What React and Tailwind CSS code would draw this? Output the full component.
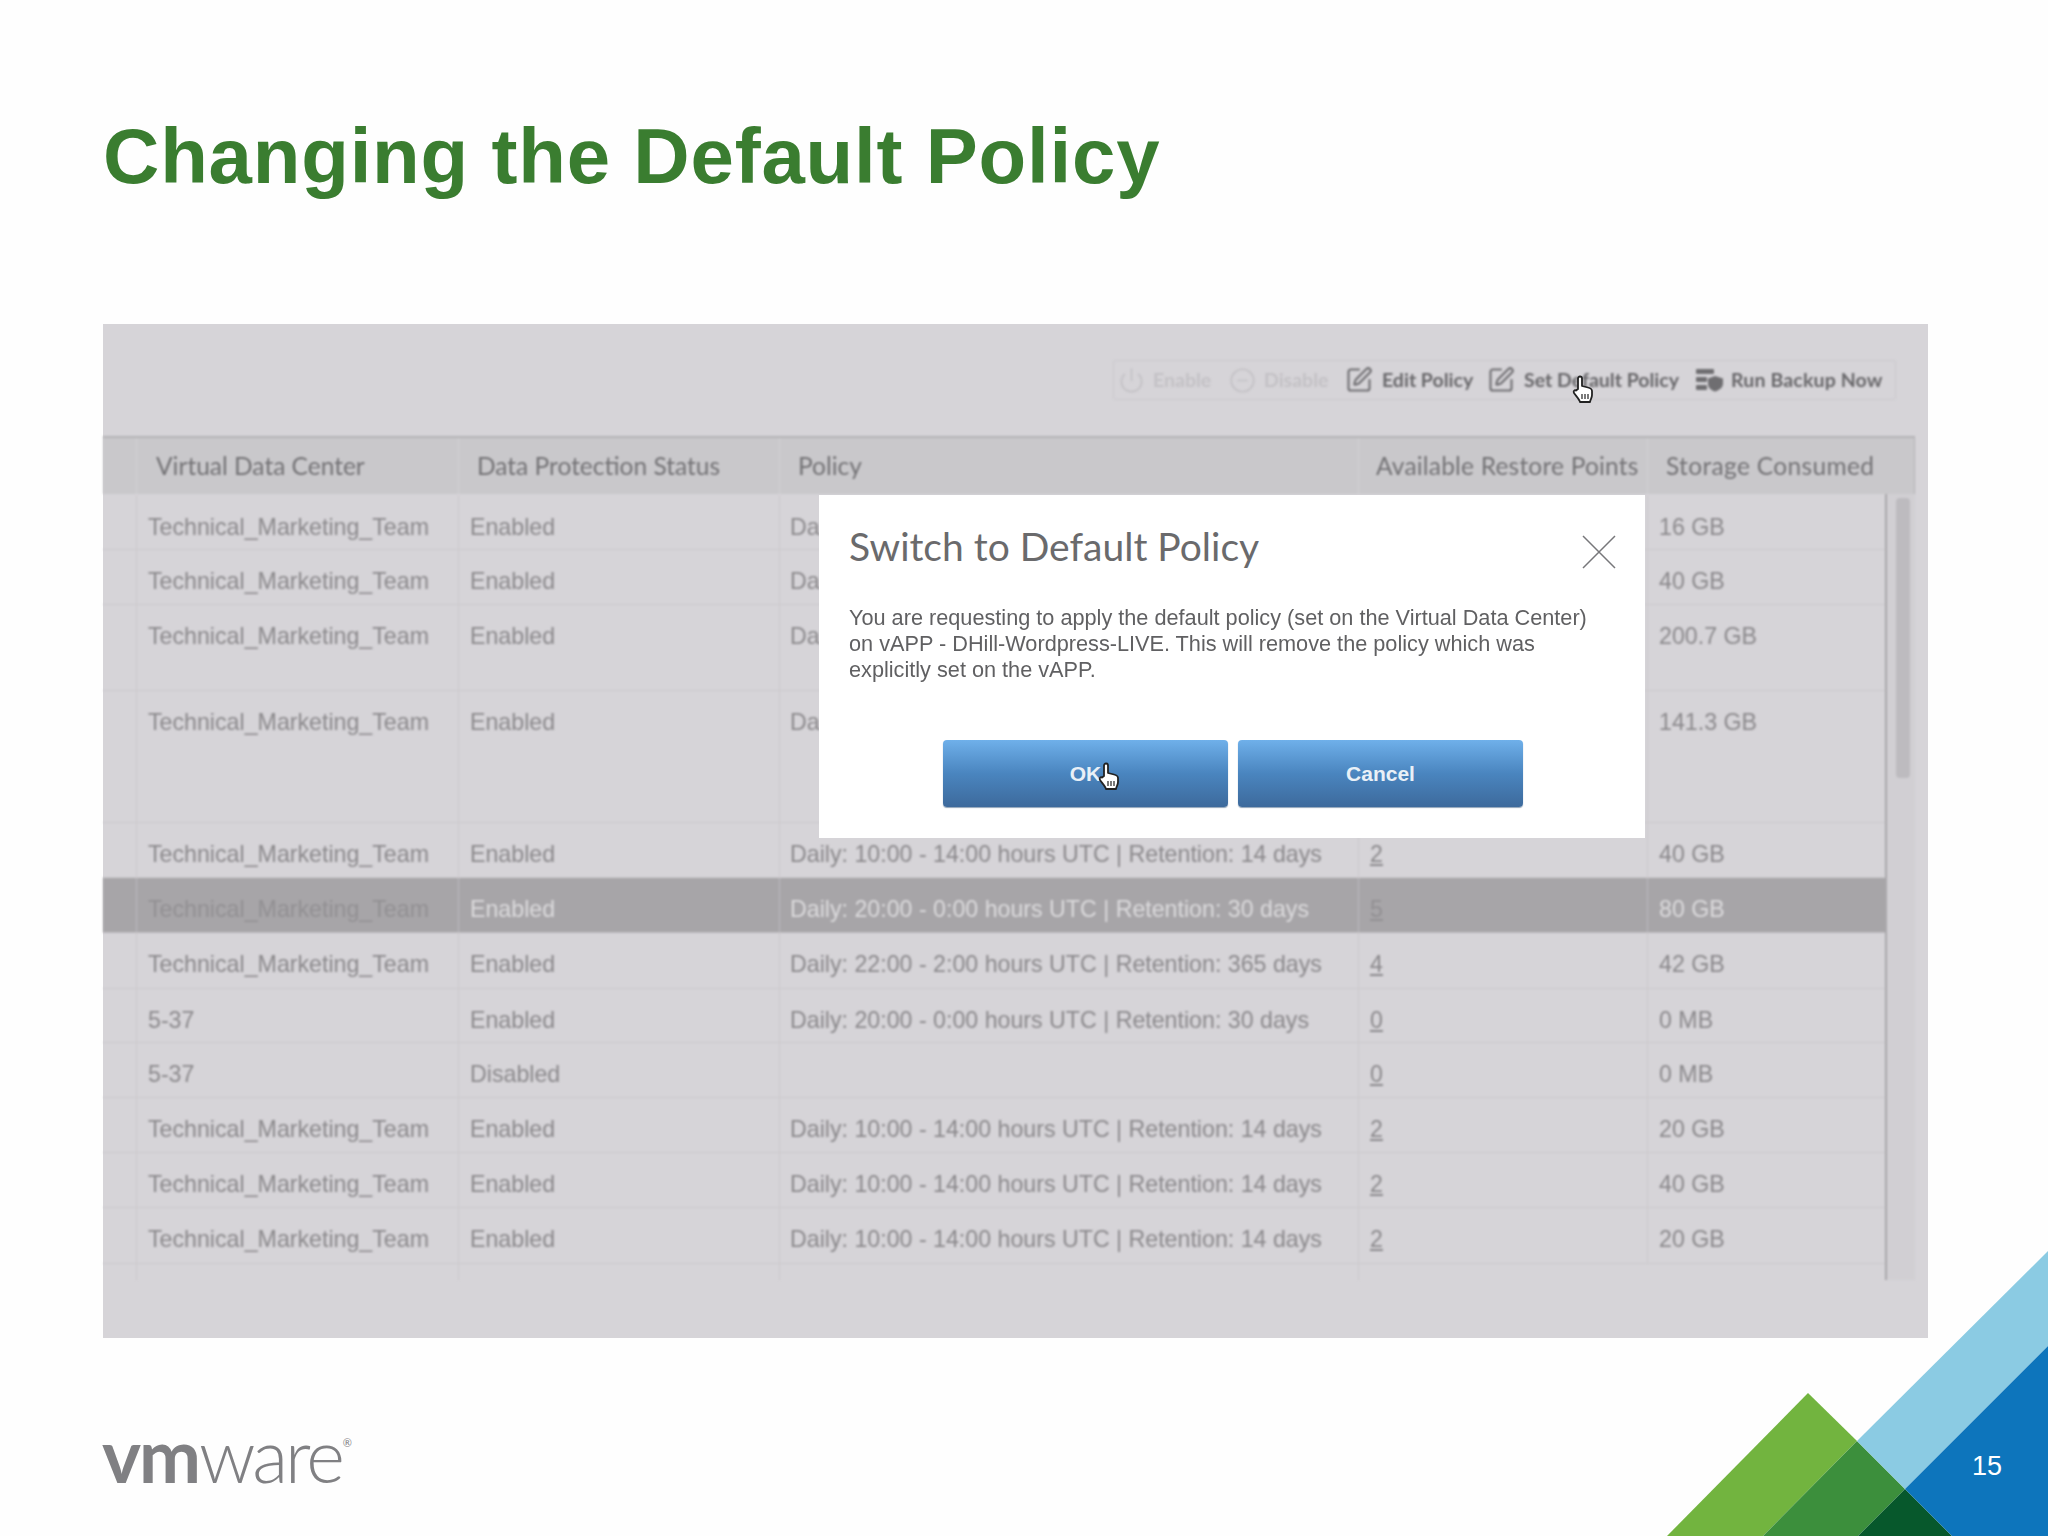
import { CircleMinus, Power, SquarePen } from "lucide-react";

const team = "Technical_Marketing_Team";
const policy14 = "Daily: 10:00 - 14:00 hours UTC | Retention: 14 days";

const rows = [
  { h: "h-[54px]", vdc: team, status: "Enabled", policy: "Daily:", points: "", size: "16 GB" },
  { h: "h-[55px]", vdc: team, status: "Enabled", policy: "Daily:", points: "", size: "40 GB" },
  { h: "h-[86px]", vdc: team, status: "Enabled", policy: "Daily:", points: "", size: "200.7 GB" },
  { h: "h-[132px]", vdc: team, status: "Enabled", policy: "Daily:", points: "", size: "141.3 GB" },
  { h: "h-[55px]", vdc: team, status: "Enabled", policy: policy14, points: "2", size: "40 GB" },
  { h: "h-[55px]", vdc: team, status: "Enabled", policy: "Daily: 20:00 - 0:00 hours UTC | Retention: 30 days", points: "5", size: "80 GB", selected: true },
  { h: "h-[56px]", vdc: team, status: "Enabled", policy: "Daily: 22:00 - 2:00 hours UTC | Retention: 365 days", points: "4", size: "42 GB" },
  { h: "h-[54px]", vdc: "5-37", status: "Enabled", policy: "Daily: 20:00 - 0:00 hours UTC | Retention: 30 days", points: "0", size: "0 MB" },
  { h: "h-[55px]", vdc: "5-37", status: "Disabled", policy: "", points: "0", size: "0 MB" },
  { h: "h-[55px]", vdc: team, status: "Enabled", policy: policy14, points: "2", size: "20 GB" },
  { h: "h-[55px]", vdc: team, status: "Enabled", policy: policy14, points: "2", size: "40 GB" },
  { h: "h-[56px]", vdc: team, status: "Enabled", policy: policy14, points: "2", size: "20 GB" },
];

export default function App() {
  return (
    <main className="relative h-[1536px] w-[2048px] overflow-hidden bg-[#fefefe] font-['Liberation_Sans',sans-serif]">
      <h1 className="pl-[103px] pt-[109px] text-[78px] font-bold leading-[94px] tracking-[0.8px] text-[#3a7d30]">
        Changing the Default Policy
      </h1>
      <VideoPanel />
      <Logo />
      <Corner />
    </main>
  );
}

function VideoPanel() {
  return (
    <section className="relative ml-[103px] mt-[121px] h-[1014px] w-[1825px] bg-[#d6d4d8]">
      <div className="h-full blur-[0.8px]">
        <Toolbar />
        <Table />
      </div>
      <HandCursor className="absolute left-[1468px] top-[50px]" />
      <Dialog />
    </section>
  );
}

function Toolbar() {
  return (
    <div className="flex justify-end pr-[32px] pt-[36px]">
      <div className="flex h-[40px] w-[783px] items-center rounded-[3px] border border-[#cbc9cd] text-[19.500px] font-bold font-['Lato',sans-serif]">
        <Power className="ml-[4px] h-[27px] w-[27px] text-[#c3c1c5]" strokeWidth={1.5} />
        <span className="ml-[8px] w-[59px] whitespace-nowrap text-[#c3c1c5]">Enable</span>
        <CircleMinus className="ml-[17px] h-[27px] w-[27px] text-[#c3c1c5]" strokeWidth={1.5} />
        <span className="ml-[8px] w-[66px] whitespace-nowrap text-[#c3c1c5]">Disable</span>
        <SquarePen className="ml-[15px] h-[28px] w-[28px] text-[#6f6e71]" strokeWidth={1.8} />
        <span className="ml-[9px] w-[91px] whitespace-nowrap text-[#68676a]">Edit Policy</span>
        <SquarePen className="ml-[14px] h-[28px] w-[28px] text-[#6f6e71]" strokeWidth={1.8} />
        <span className="ml-[9px] w-[157px] whitespace-nowrap text-[#68676a]">Set Default Policy</span>
        <BackupIcon />
        <span className="ml-[7px] whitespace-nowrap tracking-[0.15px] text-[#68676a]">Run Backup Now</span>
      </div>
    </div>
  );
}

function BackupIcon() {
  return (
    <svg viewBox="0 0 28 24" className="ml-[15px] h-[24px] w-[28px] shrink-0 text-[#6f6e71]" fill="currentColor">
      <rect x="0" y="1" width="18" height="5" rx="1" />
      <rect x="0" y="9" width="11" height="5" rx="1" />
      <rect x="0" y="17" width="11" height="5" rx="1" />
      <path d="M19 8l8 2.500v5c0 4-3.500 6.500-8 8-4.500-1.500-7-4-7-8v-5z" />
    </svg>
  );
}

function Table() {
  return (
    <div className="ml-0 mt-[36px] w-[1812px]">
      <div className="grid h-[58px] grid-cols-[33px_322px_321px_579px_289px_268px] border-r border-t-2 border-[#b4b3b6] bg-[#c9c8cb] text-[24.500px] leading-[55px] text-[#737275] font-['Lato',sans-serif]">
        <div />
        <div className="border-l border-[#d2d0d4] pl-[19px]">Virtual Data Center</div>
        <div className="border-l border-[#d2d0d4] pl-[18px]">Data Protection Status</div>
        <div className="border-l border-[#d2d0d4] pl-[18px]">Policy</div>
        <div className="border-l border-[#d2d0d4] pl-[17px] whitespace-nowrap tracking-[0.2px]">Available Restore Points</div>
        <div className="border-l border-[#d2d0d4] pl-[18px] tracking-[0.35px]">Storage Consumed</div>
      </div>
      <div className="flex">
        <div className="w-[1784px] border-r-2 border-[#a9a7ab] pt-[2px]">
          {rows.map((row, i) => (
            <Row key={i} row={row} />
          ))}
          <div className="grid h-[16px] grid-cols-[33px_322px_321px_579px_289px_240px]">
            <div />
            <div className="border-l border-[#cbc9cd]" />
            <div className="border-l border-[#cbc9cd]" />
            <div className="border-l border-[#cbc9cd]" />
            <div className="border-l border-[#cbc9cd]" />
          </div>
        </div>
        <div className="w-[28px] bg-[#d1cfd3] pl-[9px] pt-[4px]">
          <div className="h-[280px] w-[14px] rounded-[4px] bg-[#bdbbbf]" />
        </div>
      </div>
    </div>
  );
}

function Row({ row }) {
  const line = row.selected ? "border-[#bdbbbf]" : "border-[#cbc9cd]";
  const text = row.selected ? "text-[#dcdbdd]" : "text-[#8b898c]";
  return (
    <div
      className={`grid grid-cols-[33px_322px_321px_579px_289px_240px] border-b pt-[19px] text-[23.200px] leading-[25px] ${row.h} ${line} ${row.selected ? "bg-[#a7a5a8]" : ""}`}
    >
      <div className="-mt-[19px]" />
      <Cell line={line} className={`pl-[11px] ${row.selected ? "text-[#929093]" : "text-[#8b898c]"}`}>{row.vdc}</Cell>
      <Cell line={line} className={`pl-[11px] ${text}`}>{row.status}</Cell>
      <Cell line={line} className={`pl-[10px] ${text}`}>{row.policy}</Cell>
      <Cell line={line} className={`pl-[11px] underline ${row.selected ? "text-[#929093]" : "text-[#8b898c]"}`}>{row.points}</Cell>
      <Cell line={line} className={`pl-[11px] ${text}`}>{row.size}</Cell>
    </div>
  );
}

function Cell({ line, className, children }) {
  return (
    <div className={`-mt-[19px] -mb-px whitespace-nowrap border-l pt-[19px] ${line} ${className}`}>
      {children}
    </div>
  );
}

function Dialog() {
  return (
    <div className="absolute left-[716px] top-[171px] h-[343px] w-[826px] bg-white pl-[30px] pt-[29px] text-[#606062]">
      <div className="flex items-start">
        <h2 className="text-[39px] font-['Lato',sans-serif] leading-[45px] text-[#6a6a6c]">Switch to Default Policy</h2>
        <svg viewBox="0 0 34 34" className="absolute left-[763px] top-[40px] h-[34px] w-[34px] text-[#77777a]" fill="none" stroke="currentColor" strokeWidth="1.500">
          <path d="M1 1l32 32M33 1L1 33" />
        </svg>
      </div>
      <p className="mt-[36px] w-[780px] whitespace-nowrap text-[21.700px] leading-[26px] blur-[0.4px]">
        You are requesting to apply the default policy (set on the Virtual Data Center)
        <br />
        on vAPP - DHill-Wordpress-LIVE. This will remove the policy which was
        <br />
        explicitly set on the vAPP.
      </p>
      <div className="ml-[94px] mt-[57px] flex gap-[10px]">
        <DialogButton label="OK" />
        <DialogButton label="Cancel" />
      </div>
      <HandCursor className="absolute left-[278px] top-[266px]" />
    </div>
  );
}

function DialogButton({ label }) {
  return (
    <button className="h-[67px] w-[285px] rounded-[4px] bg-gradient-to-b from-[#6fb0ea] via-[#4a85bf] to-[#3d6a9c] text-[21px] font-bold text-[#e9f0f7] shadow-[0_1px_1px_#8fa3b8]">
      {label}
    </button>
  );
}

function HandCursor({ className }) {
  return (
    <svg viewBox="0 0 24 30" className={`h-[30px] w-[24px] ${className}`} fill="#fff" stroke="#222" strokeWidth="1.800" strokeLinejoin="round">
      <path d="M7 15V4.500a2 2 0 0 1 4 0V12l6 1.500c2 .5 4 1.500 4 3.500v4c0 3-1.500 4-2 7H9c-.5-2.500-4-6-6-9-1-1.500.5-3.500 2-2.500z" />
      <path d="M11 20v5M14 20v5M17 20v5" fill="none" strokeWidth="1.200" />
    </svg>
  );
}

function Logo() {
  return (
    <div className="ml-[102px] mt-[75px] flex items-start text-[74px] leading-[84px] text-[#808083] font-['Lato',sans-serif]">
      <span className="font-bold tracking-[-2px]">vm</span>
      <span className="font-light tracking-[-3px]">ware</span>
      <span className="ml-[1px] mt-[24px] text-[11px] leading-[12px]">®</span>
    </div>
  );
}

function Corner() {
  return (
    <div className="absolute bottom-0 right-0 h-[285px] w-[381px]">
      <svg viewBox="1667 1251 381 285" className="h-full w-full">
        <polygon points="1808,1393 1667,1536 1763,1536 1857,1441" fill="#72b43f" />
        <polygon points="1857,1441 1763,1536 1858,1536 1905,1489" fill="#3c8f3c" />
        <polygon points="1905,1489 1858,1536 1952,1536" fill="#07582c" />
        <polygon points="1857,1441 2048,1251 2048,1346 1905,1489" fill="#8bcbe3" />
        <polygon points="1905,1489 2048,1346 2048,1536 1952,1536" fill="#0d75bc" />
      </svg>
      <span className="absolute left-[305px] top-[199px] text-[27px] leading-[32px] text-white">15</span>
    </div>
  );
}
